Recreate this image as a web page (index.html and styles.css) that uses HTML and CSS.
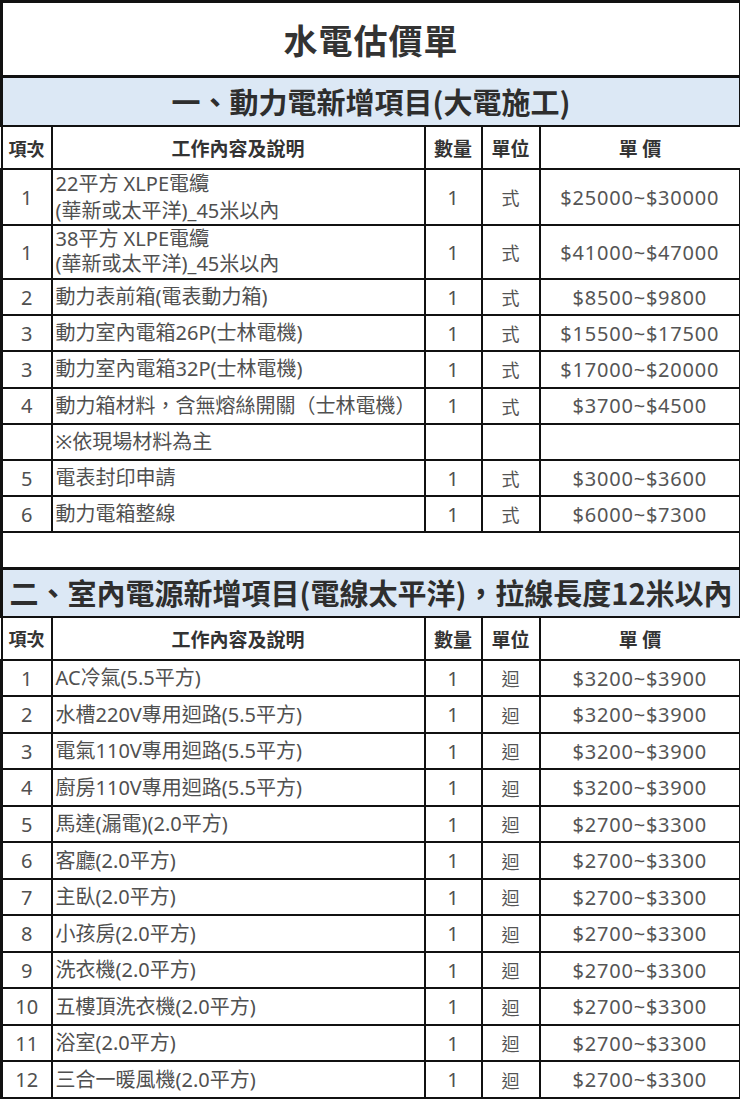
FILE: index.html
```html
<!DOCTYPE html>
<html lang="zh-Hant">
<head>
<meta charset="utf-8">
<title>水電估價單</title>
<link rel="stylesheet" href="styles.css">
</head>
<body>
<table class="sheet">
  <colgroup>
    <col class="c-no"><col class="c-desc"><col class="c-qty"><col class="c-unit"><col class="c-price">
  </colgroup>
  <tr class="title"><td colspan="5">水電估價單</td></tr>
  <tr class="sec"><td colspan="5">一、動力電新增項目(大電施工)</td></tr>
  <tr class="hdr"><th>項次</th><th>工作內容及說明</th><th>數量</th><th>單位</th><th>單 價</th></tr>
  <tr class="tall r1"><td class="no">1</td><td class="desc top">22平方 XLPE電纜<br>(華新或太平洋)_45米以內</td><td class="num">1</td><td class="unit">式</td><td class="price">$25000~$30000</td></tr>
  <tr class="tall r2"><td class="no">1</td><td class="desc top">38平方 XLPE電纜<br>(華新或太平洋)_45米以內</td><td class="num">1</td><td class="unit">式</td><td class="price">$41000~$47000</td></tr>
  <tr class="row s1 lt"><td class="no">2</td><td class="desc">動力表前箱(電表動力箱)</td><td class="num">1</td><td class="unit">式</td><td class="price">$8500~$9800</td></tr>
  <tr class="row s1"><td class="no">3</td><td class="desc">動力室內電箱26P(士林電機)</td><td class="num">1</td><td class="unit">式</td><td class="price">$15500~$17500</td></tr>
  <tr class="row s1"><td class="no">3</td><td class="desc">動力室內電箱32P(士林電機)</td><td class="num">1</td><td class="unit">式</td><td class="price">$17000~$20000</td></tr>
  <tr class="row s1"><td class="no">4</td><td class="desc">動力箱材料，含無熔絲開關（士林電機）</td><td class="num">1</td><td class="unit">式</td><td class="price">$3700~$4500</td></tr>
  <tr class="row s1 lt"><td class="no"></td><td class="desc">※依現場材料為主</td><td class="num"></td><td class="unit"></td><td class="price"></td></tr>
  <tr class="row s1"><td class="no">5</td><td class="desc">電表封印申請</td><td class="num">1</td><td class="unit">式</td><td class="price">$3000~$3600</td></tr>
  <tr class="row s1 lt"><td class="no">6</td><td class="desc">動力電箱整線</td><td class="num">1</td><td class="unit">式</td><td class="price">$6000~$7300</td></tr>
  <tr class="blank"><td colspan="5"></td></tr>
  <tr class="sec sec2"><td colspan="5">二、室內電源新增項目(電線太平洋)，拉線長度12米以內</td></tr>
  <tr class="hdr"><th>項次</th><th>工作內容及說明</th><th>數量</th><th>單位</th><th>單 價</th></tr>
  <tr class="row"><td class="no">1</td><td class="desc">AC冷氣(5.5平方)</td><td class="num">1</td><td class="unit">迴</td><td class="price">$3200~$3900</td></tr>
  <tr class="row lt"><td class="no">2</td><td class="desc">水槽220V專用迴路(5.5平方)</td><td class="num">1</td><td class="unit">迴</td><td class="price">$3200~$3900</td></tr>
  <tr class="row"><td class="no">3</td><td class="desc">電氣110V專用迴路(5.5平方)</td><td class="num">1</td><td class="unit">迴</td><td class="price">$3200~$3900</td></tr>
  <tr class="row lt"><td class="no">4</td><td class="desc">廚房110V專用迴路(5.5平方)</td><td class="num">1</td><td class="unit">迴</td><td class="price">$3200~$3900</td></tr>
  <tr class="row"><td class="no">5</td><td class="desc">馬達(漏電)(2.0平方)</td><td class="num">1</td><td class="unit">迴</td><td class="price">$2700~$3300</td></tr>
  <tr class="row lt"><td class="no">6</td><td class="desc">客廳(2.0平方)</td><td class="num">1</td><td class="unit">迴</td><td class="price">$2700~$3300</td></tr>
  <tr class="row"><td class="no">7</td><td class="desc">主臥(2.0平方)</td><td class="num">1</td><td class="unit">迴</td><td class="price">$2700~$3300</td></tr>
  <tr class="row lt"><td class="no">8</td><td class="desc">小孩房(2.0平方)</td><td class="num">1</td><td class="unit">迴</td><td class="price">$2700~$3300</td></tr>
  <tr class="row"><td class="no">9</td><td class="desc">洗衣機(2.0平方)</td><td class="num">1</td><td class="unit">迴</td><td class="price">$2700~$3300</td></tr>
  <tr class="row lt"><td class="no">10</td><td class="desc">五樓頂洗衣機(2.0平方)</td><td class="num">1</td><td class="unit">迴</td><td class="price">$2700~$3300</td></tr>
  <tr class="row"><td class="no">11</td><td class="desc">浴室(2.0平方)</td><td class="num">1</td><td class="unit">迴</td><td class="price">$2700~$3300</td></tr>
  <tr class="row"><td class="no">12</td><td class="desc">三合一暖風機(2.0平方)</td><td class="num">1</td><td class="unit">迴</td><td class="price">$2700~$3300</td></tr>
</table>
</body>
</html>
```

FILE: styles.css
```css
html, body {
  margin: 0;
  padding: 0;
  background: #ffffff;
}

.sheet {
  border-collapse: collapse;
  table-layout: fixed;
  width: 739px;
  font-family: "Noto Sans", "Noto Sans CJK TC", sans-serif;
  color: #505050;
}

.c-no { width: 50px; }
.c-desc { width: 373px; }
.c-qty { width: 57px; }
.c-unit { width: 58px; }
.c-price { width: 201px; }

.sheet td, .sheet th {
  padding: 0;
  border: 2px solid #111;
  font-weight: normal;
  white-space: nowrap;
  overflow: hidden;
}

.title td {
  height: 72px;
  border: 3px solid #111;
  text-align: center;
  font-family: "Noto Sans CJK TC", sans-serif;
  font-weight: 600;
  font-size: 34px;
  color: #333;
  letter-spacing: 1px;
}

.sec td {
  height: 47px;
  border-top: 3px solid #111;
  border-left: 3px solid #111;
  border-right: 3px solid #111;
  background: #dce8f5;
  text-align: center;
  font-family: "Noto Sans CJK TC", sans-serif;
  font-weight: 600;
  font-size: 29px;
  color: #2e2e2e;
  line-height: 1;
}

.sec2 td {
  height: 46px;
}

.hdr th {
  height: 41px;
  font-family: "Noto Sans CJK TC", sans-serif;
  font-weight: 600;
  font-size: 19px;
  color: #333;
  text-align: center;
}

.hdr th:first-child { font-size: 18px; }

.tall.r1 td { height: 54px; }
.tall.r2 td { height: 52px; }

.tall.r1 .desc { line-height: 27px; }
.tall.r2 .desc { line-height: 25px; }

.row td { height: 34.5px; }
.row.s1 td { height: 34.2px; }

.row.lt td {
  border-top: 1px solid #666;
}

.blank td {
  height: 33.5px;
  border-left: 3px solid #111;
  border-right: 3px solid #111;
}

.no {
  text-align: center;
  font-size: 20px;
  border-left: 3px solid #111 !important;
}

.desc {
  text-align: left;
  font-size: 20px;
  padding-left: 3px !important;
  line-height: 26px;
}

.desc.top {
  vertical-align: top;
  padding-top: 0 !important;
}

.num, .unit {
  text-align: center;
  font-size: 20px;
}

.unit {
  font-size: 18px;
  color: #555;
}

.price {
  text-align: center;
  font-size: 20px;
  letter-spacing: 0.8px;
  border-right: 3px solid #111 !important;
  color: #555;
}
```
